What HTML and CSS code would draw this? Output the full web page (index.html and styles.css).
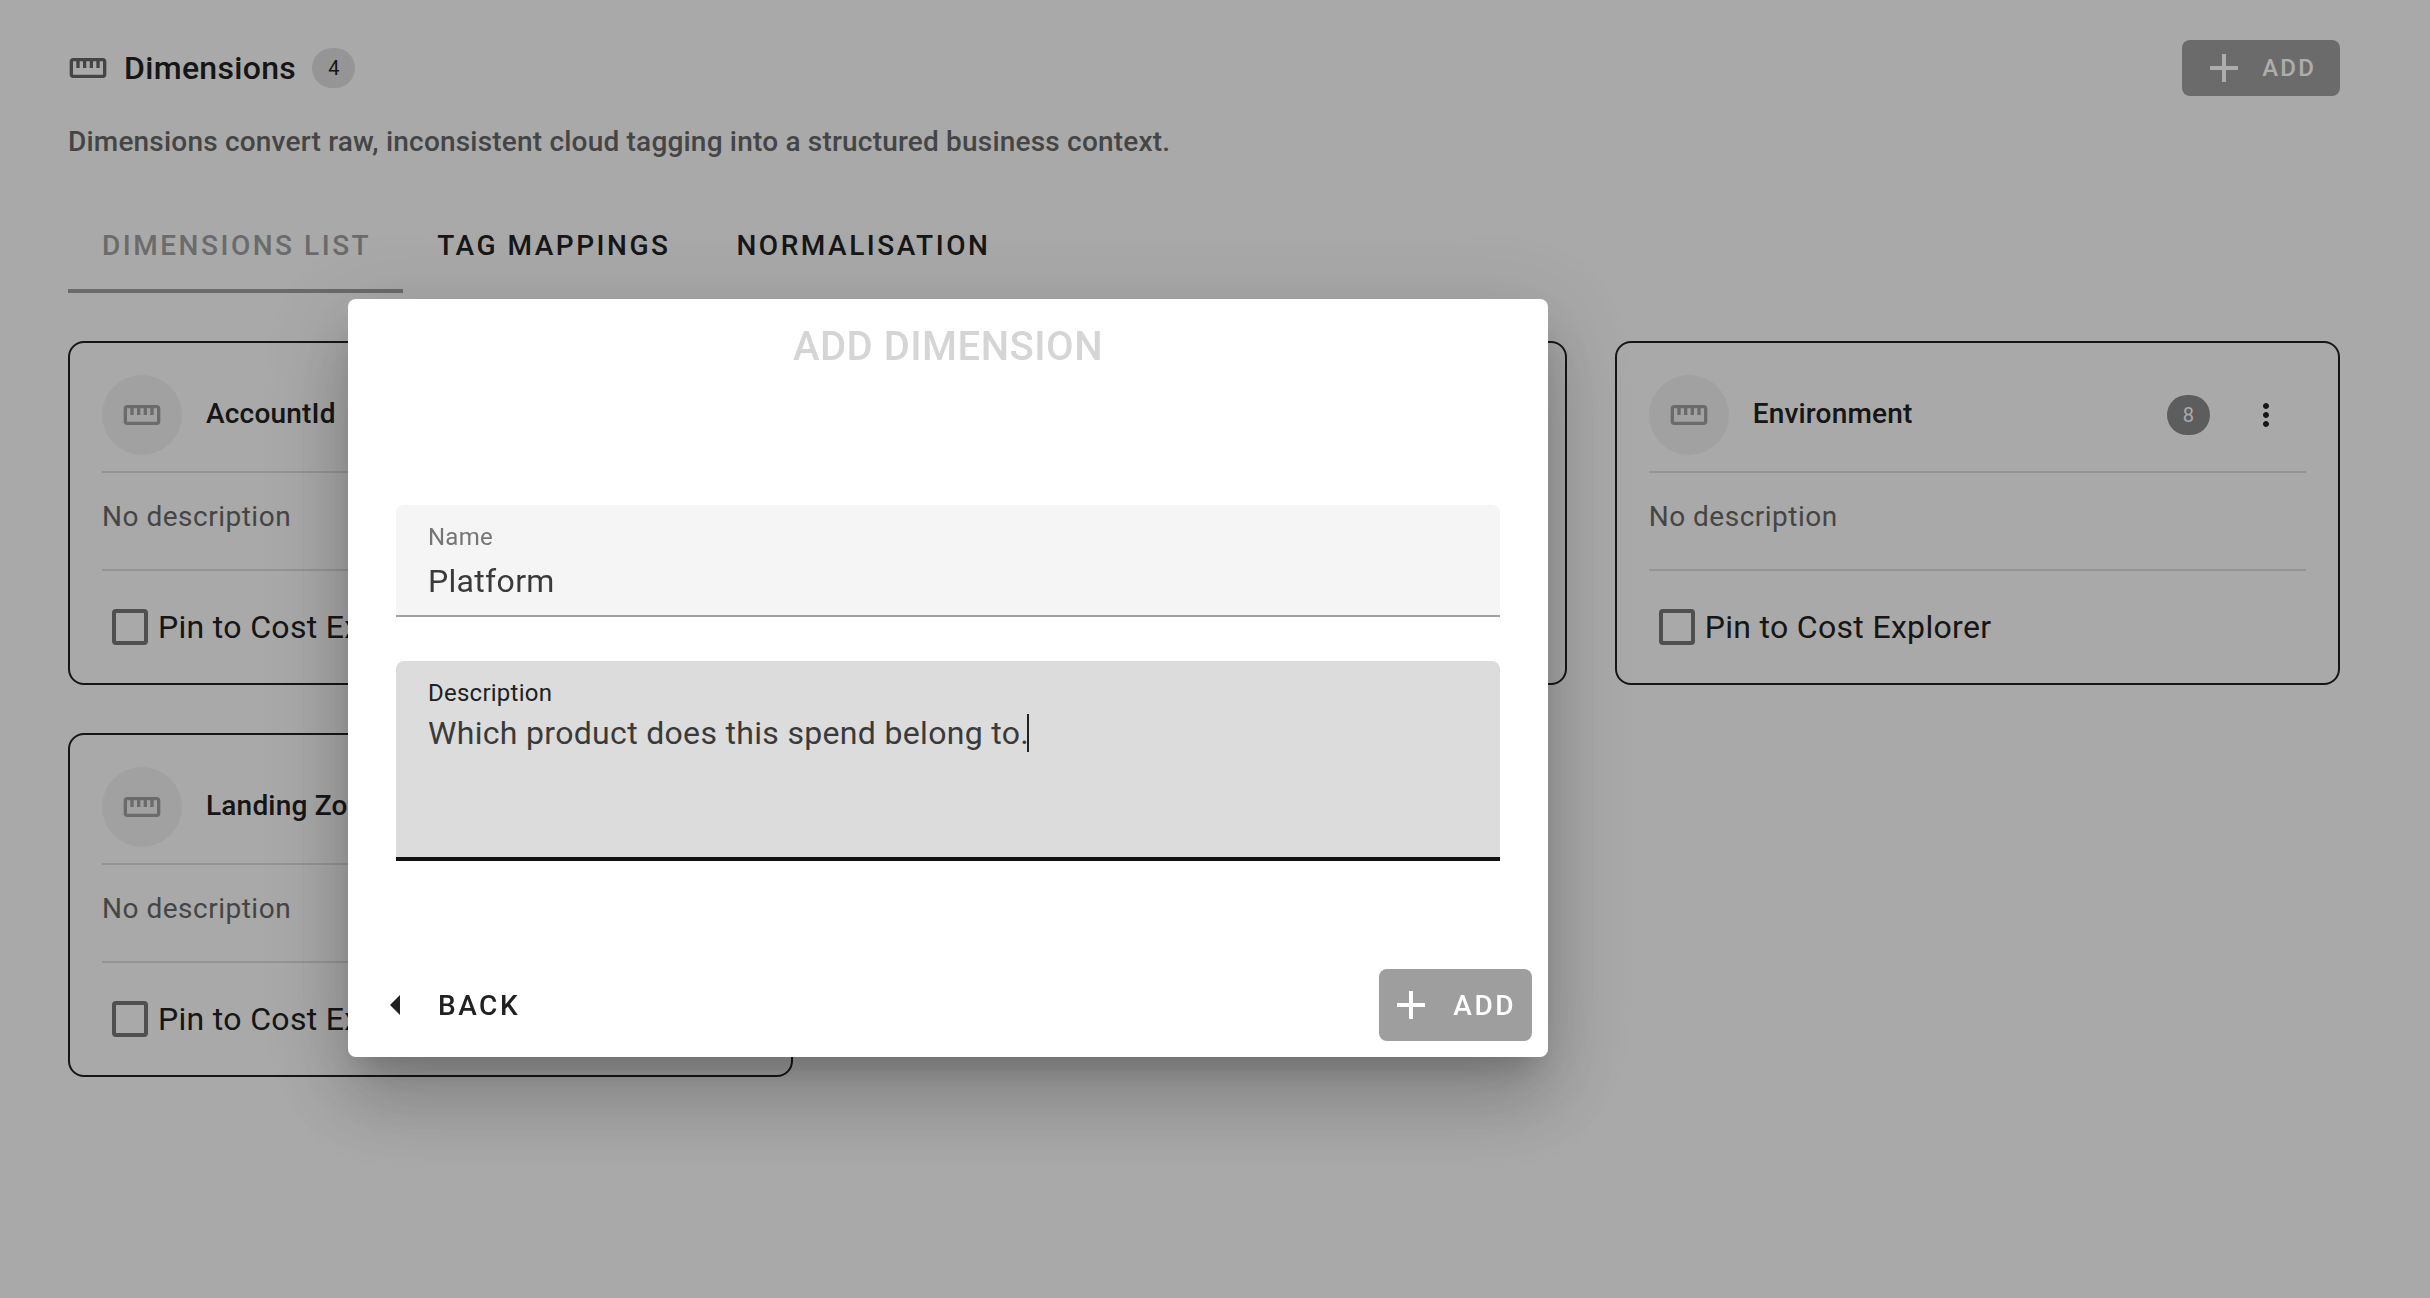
FILE: index.html
```html
<!DOCTYPE html>
<html lang="en">
<head>
    <meta charset="UTF-8">
    <meta name="viewport" content="width=device-width, initial-scale=1.0">
    <title>Dimensions</title>
    <link rel="stylesheet" href="styles.css">
</head>
<body>
    <svg class="sprite" aria-hidden="true">
        <symbol id="ruler" viewBox="0 0 24 24">
            <path d="M21 6H3c-1.1 0-2 .9-2 2v8c0 1.1.9 2 2 2h18c1.1 0 2-.9 2-2V8c0-1.1-.9-2-2-2zm0 10H3V8h2v4h2V8h2v4h2V8h2v4h2V8h2v4h2V8h2v8z"/>
        </symbol>
        <symbol id="plus" viewBox="0 0 24 24">
            <path d="M19 13h-6v6h-2v-6H5v-2h6V5h2v6h6v2z"/>
        </symbol>
        <symbol id="more" viewBox="0 0 24 24">
            <path d="M12 8c1.1 0 2-.9 2-2s-.9-2-2-2-2 .9-2 2 .9 2 2 2zm0 2c-1.1 0-2 .9-2 2s.9 2 2 2 2-.9 2-2-.9-2-2-2zm0 6c-1.1 0-2 .9-2 2s.9 2 2 2 2-.9 2-2-.9-2-2-2z"/>
        </symbol>
        <symbol id="arrow-left" viewBox="0 0 24 24">
            <path d="M14 7l-5 5 5 5V7z"/>
        </symbol>
    </svg>

    <main class="page">
        <header class="page-header">
            <svg class="icon title-icon"><use href="#ruler"/></svg>
            <h1 class="page-title">Dimensions</h1>
            <span class="badge">4</span>
            <button class="btn btn-filled btn-small" type="button">
                <svg class="icon-large"><use href="#plus"/></svg>
                ADD
            </button>
        </header>
        <p class="subtitle">Dimensions convert raw, inconsistent cloud tagging into a structured business context.</p>

        <div class="tabs" role="tablist">
            <button class="tab active" type="button" role="tab" aria-selected="true">DIMENSIONS LIST</button>
            <button class="tab" type="button" role="tab" aria-selected="false">TAG MAPPINGS</button>
            <button class="tab" type="button" role="tab" aria-selected="false">NORMALISATION</button>
        </div>

        <section class="cards">
            <article class="card">
                <div class="card-header">
                    <span class="avatar"><svg class="icon"><use href="#ruler"/></svg></span>
                    <h2 class="card-name">AccountId</h2>
                    <button class="menu-btn" type="button" aria-label="More"><svg class="icon-menu"><use href="#more"/></svg></button>
                </div>
                <p class="card-description">No description</p>
                <div class="card-footer">
                    <input type="checkbox" class="checkbox" id="pin-account">
                    <label for="pin-account">Pin to Cost Explorer</label>
                </div>
            </article>
            <article class="card"></article>
            <article class="card">
                <div class="card-header">
                    <span class="avatar"><svg class="icon"><use href="#ruler"/></svg></span>
                    <h2 class="card-name">Environment</h2>
                    <span class="badge badge-dark">8</span>
                    <button class="menu-btn" type="button" aria-label="More"><svg class="icon-menu"><use href="#more"/></svg></button>
                </div>
                <p class="card-description">No description</p>
                <div class="card-footer">
                    <input type="checkbox" class="checkbox" id="pin-environment">
                    <label for="pin-environment">Pin to Cost Explorer</label>
                </div>
            </article>
            <article class="card">
                <div class="card-header">
                    <span class="avatar"><svg class="icon"><use href="#ruler"/></svg></span>
                    <h2 class="card-name">Landing Zone</h2>
                    <button class="menu-btn" type="button" aria-label="More"><svg class="icon-menu"><use href="#more"/></svg></button>
                </div>
                <p class="card-description">No description</p>
                <div class="card-footer">
                    <input type="checkbox" class="checkbox" id="pin-landing">
                    <label for="pin-landing">Pin to Cost Explorer</label>
                </div>
            </article>
        </section>
    </main>

    <div class="overlay">
        <form class="dialog" role="dialog" aria-modal="true" aria-labelledby="dialog-title">
            <h2 class="dialog-title" id="dialog-title">ADD DIMENSION</h2>
            <div class="dialog-content">
                <div class="field">
                    <label class="field-label" for="name">Name</label>
                    <input class="field-input" type="text" id="name" value="Platform">
                </div>
                <div class="field field-area focused">
                    <label class="field-label" for="description">Description</label>
                    <textarea class="field-input" id="description">Which product does this spend belong to.</textarea>
                    <span class="caret"></span>
                </div>
            </div>
            <div class="dialog-actions">
                <button class="btn" type="button">
                    <svg class="icon-large"><use href="#arrow-left"/></svg>
                    BACK
                </button>
                <button class="btn btn-filled" type="button">
                    <svg class="icon-large"><use href="#plus"/></svg>
                    ADD
                </button>
            </div>
        </form>
    </div>
</body>
</html>
```
FILE: styles.css
```css
* {
    box-sizing: border-box;
}

body {
    margin: 0;
    min-height: 100vh;
    background-color: #fafafa;
    color: #212121;
    font-family: Roboto, Arial, sans-serif;
    font-size: 28px;
}

h1, h2, p {
    margin: 0;
}

button, input, textarea {
    font-family: inherit;
    color: inherit;
}

button {
    border: none;
    background: none;
    cursor: pointer;
}

svg {
    display: block;
    flex: none;
    fill: currentColor;
}

.sprite {
    position: absolute;
    width: 0;
    height: 0;
}

.icon {
    width: 40px;
    height: 40px;
}

.icon-large {
    width: 48px;
    height: 48px;
}

.icon-menu {
    width: 36px;
    height: 36px;
}

.page {
    padding: 40px 90px 48px 68px;
}

/* header */
.page-header {
    display: flex;
    align-items: center;
    height: 56px;
}

.title-icon {
    color: #666;
}

.page-title {
    margin: 0 16px;
    font-size: 32px;
    font-weight: 500;
    letter-spacing: 0.01em;
}

.badge {
    padding: 0 16px;
    border-radius: 20px;
    background-color: #dcdcdc;
    font-size: 20px;
    line-height: 40px;
}

.badge-dark {
    background-color: #898989;
    color: #fafafa;
}

.btn {
    display: flex;
    align-items: center;
    gap: 18px;
    height: 72px;
    padding: 0 16px 0 8px;
    border-radius: 8px;
    font-size: 28px;
    font-weight: 500;
    letter-spacing: 0.09em;
}

.btn-filled {
    background-color: #9e9e9e;
    color: #fff;
}

.btn-small {
    gap: 14px;
    height: 56px;
    margin-left: auto;
    padding: 0 24px 0 18px;
    font-size: 24px;
}

.subtitle {
    margin-top: 24px;
    color: #666;
    font-weight: 500;
    line-height: 44px;
    letter-spacing: 0.007em;
}

/* tabs */
.tabs {
    display: flex;
    margin-top: 33px;
}

.tab {
    height: 96px;
    padding: 4px 32px 0 34px;
    border-bottom: 4px solid transparent;
    font-size: 28px;
    font-weight: 500;
    letter-spacing: 0.09em;
}

.tab.active {
    border-bottom-color: #9e9e9e;
    color: #9e9e9e;
}

/* cards */
.cards {
    display: grid;
    grid-template-columns: repeat(3, 1fr);
    gap: 48px;
    margin-top: 48px;
}

.card {
    padding: 32px 32px 0;
    border: 2px solid #212121;
    border-radius: 16px;
}

.card-header {
    display: flex;
    align-items: center;
    padding-bottom: 16px;
    border-bottom: 2px solid #dcdcdc;
}

.avatar {
    display: grid;
    place-items: center;
    width: 80px;
    height: 80px;
    border-radius: 50%;
    background-color: #eee;
    color: #9e9e9e;
}

.card-name {
    flex: 1;
    margin-left: 24px;
    padding-bottom: 4px;
    font-size: 28px;
    font-weight: 500;
    letter-spacing: 0.007em;
}

.menu-btn {
    display: grid;
    place-items: center;
    width: 80px;
    height: 80px;
    margin-left: 16px;
    padding: 0;
}

.card-description {
    padding: 24px 0 32px;
    border-bottom: 2px solid #dcdcdc;
    color: #666;
    line-height: 40px;
    letter-spacing: 0.018em;
}

.card-footer {
    display: flex;
    align-items: center;
    gap: 10px;
    height: 112px;
    padding-left: 10px;
    font-size: 32px;
    letter-spacing: 0.01em;
}

.checkbox {
    appearance: none;
    width: 36px;
    height: 36px;
    margin: 0;
    border: 4px solid #757575;
    border-radius: 4px;
}

/* dialog */
.overlay {
    position: fixed;
    inset: 0;
    display: flex;
    align-items: center;
    justify-content: center;
    padding: 58px 534px 0 0;
    background-color: rgba(0, 0, 0, 0.32);
}

.dialog {
    width: 1200px;
    border-radius: 8px;
    background-color: #fff;
    box-shadow: 0 22px 30px -14px rgba(0, 0, 0, 0.2),
        0 48px 76px 6px rgba(0, 0, 0, 0.14),
        0 18px 92px 16px rgba(0, 0, 0, 0.12);
}

.dialog-title {
    color: #d5d5d5;
    font-size: 40px;
    font-weight: 500;
    line-height: 96px;
    letter-spacing: 0.0125em;
    text-align: center;
}

.dialog-content {
    display: grid;
    gap: 44px;
    padding: 110px 48px 108px;
}

.field {
    display: flex;
    flex-direction: column;
    height: 112px;
    padding: 16px 32px 0;
    border-bottom: 2px solid #a0a0a0;
    border-radius: 8px 8px 0 0;
    background-color: #f5f5f5;
}

.field-label {
    color: #757575;
    font-size: 24px;
    line-height: 32px;
    letter-spacing: 0.01em;
}

.field-input {
    width: 100%;
    height: 56px;
    padding: 0;
    border: none;
    outline: none;
    background: none;
    color: #3a3a3a;
    font-size: 32px;
    line-height: 48px;
    letter-spacing: 0.01em;
    resize: none;
}

.field-area {
    position: relative;
    height: 200px;
    border-bottom-width: 4px;
}

.field-area .field-input {
    height: 144px;
}

.focused {
    border-bottom-color: #111;
    background-color: #dcdcdc;
}

.focused .field-label {
    color: #212121;
}

.caret {
    position: absolute;
    top: 53px;
    left: 631px;
    width: 2px;
    height: 38px;
    background-color: #212121;
}

.dialog-actions {
    display: flex;
    justify-content: space-between;
    padding: 0 16px 16px;
}
```
